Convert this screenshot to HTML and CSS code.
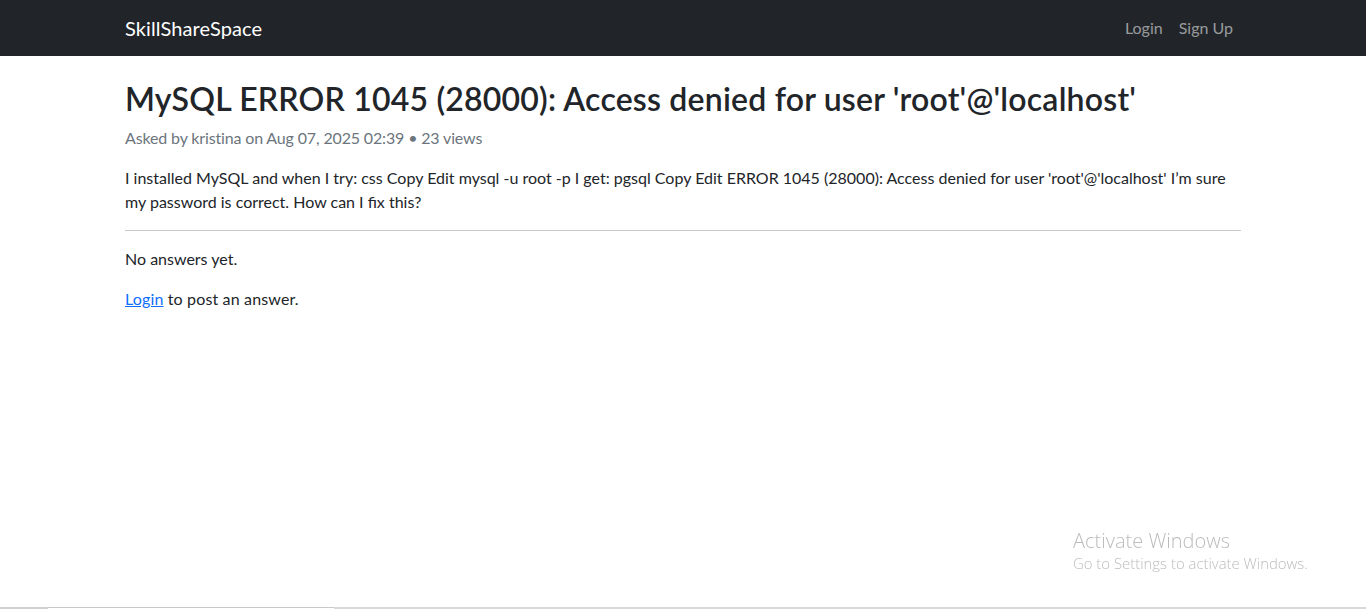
FILE: index.html
```html
<!DOCTYPE html>
<html lang="en">
<head>
<meta charset="utf-8">
<title>MySQL ERROR 1045 (28000) - SkillShareSpace</title>
<link rel="stylesheet" href="styles.css">
</head>
<body>
<nav class="navbar">
  <div class="container nav-inner">
    <a class="brand" href="#">SkillShareSpace</a>
    <ul class="nav-links">
      <li><a href="#">Login</a></li>
      <li><a href="#">Sign Up</a></li>
    </ul>
  </div>
</nav>
<main class="container content">
  <h2 class="title">MySQL ERROR 1045 (28000): Access denied for user 'root'@'localhost'</h2>
  <p class="meta">Asked by kristina on Aug 07, 2025 02:39 • 23 views</p>
  <p>I installed MySQL and when I try: css Copy Edit mysql -u root -p I get: pgsql Copy Edit ERROR 1045 (28000): Access denied for user 'root'@'localhost' I’m sure my password is correct. How can I fix this?</p>
  <hr class="divider">
  <p>No answers yet.</p>
  <p class="login-line"><a class="link" href="#">Login</a> to post an answer.</p>
</main>
<div class="watermark">
  <div class="wm-title">Activate Windows</div>
  <div class="wm-sub">Go to Settings to activate Windows.</div>
</div>
<div class="taskbar-edge"><span class="tb-a"></span><span class="tb-b"></span><span class="tb-c"></span></div>
</body>
</html>
```
FILE: styles.css
```css
* { box-sizing: border-box; }
html, body { margin: 0; padding: 0; }
body {
  font-family: Lato, "Noto Sans", sans-serif;
  font-size: 16px;
  line-height: 1.5;
  color: #212529;
  background: #fff;
  height: 609px;
  overflow: hidden;
}
.container {
  max-width: 1140px;
  margin: 0 auto;
  padding: 0 12px;
}
.navbar {
  background: #212529;
  height: 56px;
  display: flex;
  align-items: center;
}
.nav-inner {
  width: 100%;
  display: flex;
  justify-content: space-between;
  align-items: center;
}
.brand {
  color: #fff;
  font-size: 20px;
  text-decoration: none;
  line-height: 30px;
  letter-spacing: 0.1px;
}
.nav-links {
  list-style: none;
  margin: 0;
  padding: 0;
  display: flex;
}
.nav-links a {
  display: block;
  padding: 8px 8px;
  color: rgba(255,255,255,0.55);
  text-decoration: none;
}
.content { padding-top: 24px; }
.title {
  margin: 0 0 8px;
  font-size: 32px;
  font-weight: 600;
  line-height: 1.2;
  letter-spacing: 0.2px;
}
p { margin: 0 0 16px; }
.meta { color: #6c757d; letter-spacing: -0.15px; }
.login-line { letter-spacing: 0.15px; }
.divider {
  margin: 16px 0;
  border: 0;
  border-top: 1px solid #212529;
  opacity: 0.25;
}
.link { color: #0d6efd; text-decoration: underline; }
.watermark {
  position: fixed;
  left: 1073px;
  top: 529px;
  color: #bcbcbc;
  font-family: "Open Sans", sans-serif;
  font-weight: 300;
}
.wm-title { font-size: 20px; line-height: 24px; }
.wm-sub { font-size: 14.9px; line-height: 21px; }
.taskbar-edge {
  position: fixed;
  left: 0; right: 0; bottom: 0;
  height: 2px;
  display: flex;
  background: #d4d6db;
}
.tb-a { width: 48px; background: #d0d0d4; }
.tb-b { width: 286px; background: #ffffff; border-top: 1px solid #c8c8c8; }
.tb-c { flex: 1; background: #d6d8dc; }
```
